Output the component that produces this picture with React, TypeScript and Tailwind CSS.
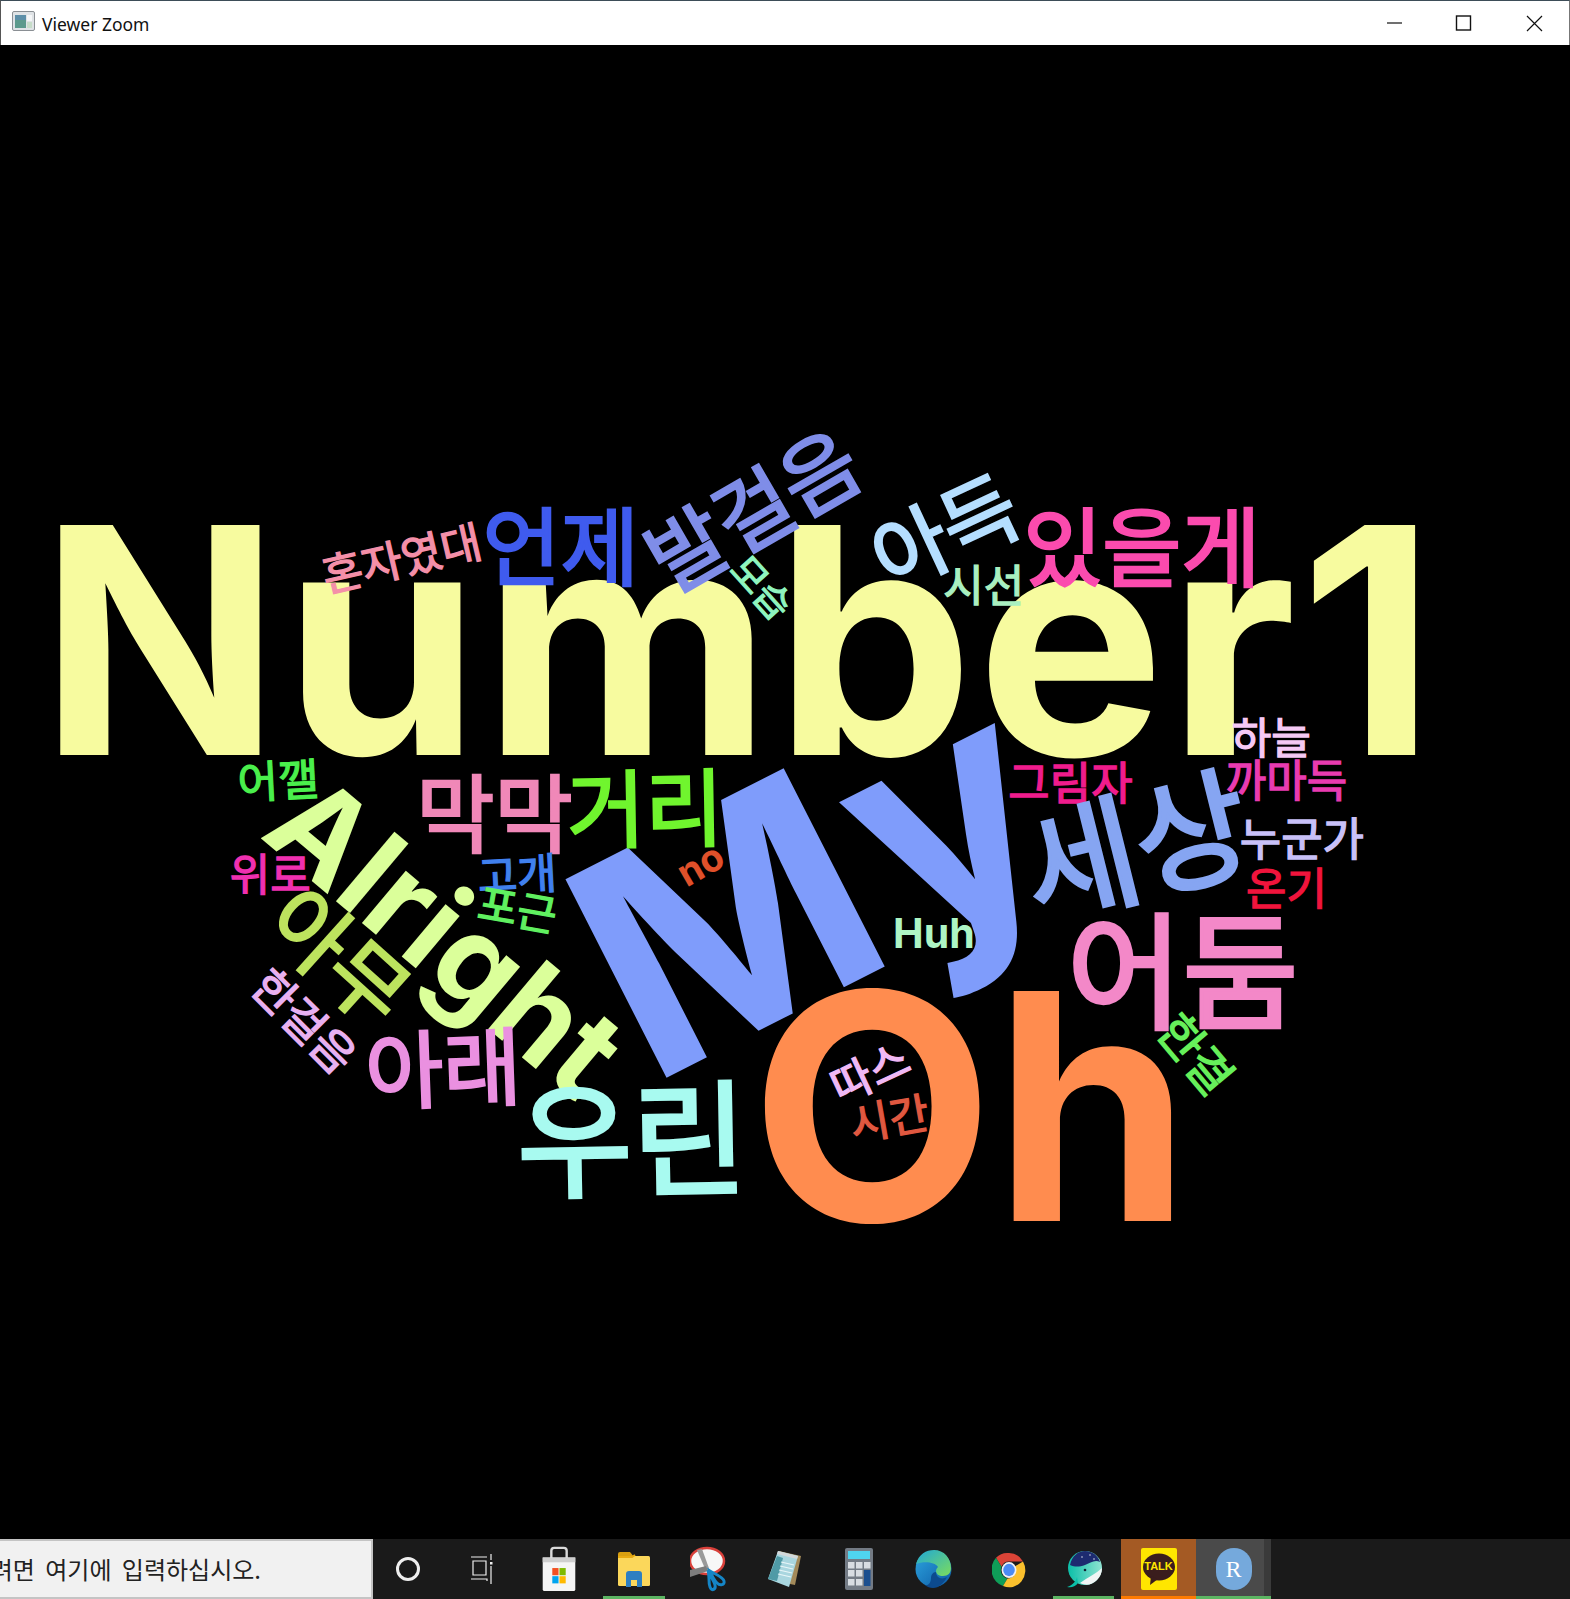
import { CSSProperties, ReactNode } from 'react';

const S = 1570 / 1540;

type Word = { t: string; x: number; y: number; f: number; r?: number; c: string; latin?: boolean; ls?: number };

// x, y, are centres measured on the shrunk reference, f is the font size in real pixels
const words: Word[] = [
  { t: 'Number1', x: 725, y: 628, f: 316, c: '#f7fb9f', latin: true, ls: 3 },
  { t: 'Oh', x: 952, y: 1085, f: 316, c: '#ff8c4f', latin: true },
  { t: 'My', x: 798, y: 861, f: 306, r: -27, c: '#7f9cfb', latin: true, ls: 6 },
  { t: 'Alright', x: 438, y: 917, f: 125, r: 40, c: '#dbff9a', latin: true },
  { t: 'Huh', x: 916, y: 915, f: 41, c: '#aef5c5', latin: true },
  { t: 'no', x: 687, y: 847, f: 38, r: -30, c: '#e0502a', latin: true },
  { t: '혼자였대', x: 393, y: 545, f: 44, r: -13, c: '#f48fa8' },
  { t: '언제', x: 550, y: 531, f: 85, c: '#3f5bee' },
  { t: '발걸음', x: 737, y: 497, f: 83, r: -30, c: '#7f8de8' },
  { t: '모습', x: 748, y: 575, f: 38, r: 48, c: '#8ff5be' },
  { t: '아득', x: 925, y: 518, f: 82, r: -25, c: '#b5deff' },
  { t: '있을게', x: 1120, y: 533, f: 86, c: '#fb4bae' },
  { t: '시선', x: 965, y: 572, f: 44, c: '#a9f0c0' },
  { t: '하늘', x: 1247, y: 721, f: 43, c: '#f5c9f5' },
  { t: '까마득', x: 1262, y: 763, f: 44, c: '#e93bb0' },
  { t: '그림자', x: 1050, y: 765, f: 45, c: '#f01c8c' },
  { t: '누군가', x: 1277, y: 820, f: 45, c: '#c8c0f8' },
  { t: '온기', x: 1262, y: 869, f: 44, c: '#f0143c' },
  { t: '세상', x: 1112, y: 823, f: 124, r: -14, c: '#86a5f2' },
  { t: '어둠', x: 1160, y: 946, f: 126, c: '#f388c8' },
  { t: '한결', x: 1175, y: 1032, f: 47, r: 50, c: '#66f05a' },
  { t: '거리', x: 633, y: 788, f: 85, r: -1, c: '#70f52e' },
  { t: '막막', x: 485, y: 793, f: 85, c: '#f088b8' },
  { t: '어깰', x: 273, y: 763, f: 44, r: -3, c: '#4aef4c' },
  { t: '위로', x: 265, y: 855, f: 44, c: '#f030b0' },
  { t: '고개', x: 507, y: 855, f: 43, r: -3, c: '#4080ee' },
  { t: '포근', x: 508, y: 890, f: 43, r: 10, c: '#60f060' },
  { t: '아무', x: 335, y: 935, f: 84, r: 42, c: '#bde35e' },
  { t: '한걸음', x: 300, y: 1000, f: 45, r: 45, c: '#e8b0f0' },
  { t: '아래', x: 435, y: 1043, f: 85, r: -2, c: '#ea90e0' },
  { t: '우린', x: 620, y: 1110, f: 125, r: -1, c: '#a8faf0' },
  { t: '따스', x: 852, y: 1050, f: 44, r: -25, c: '#f0b8f5' },
  { t: '시간', x: 872, y: 1095, f: 43, r: -10, c: '#e05840' },
];

function CloudWord({ w }: { w: Word }) {
  const style: CSSProperties = {
    left: w.x * S,
    top: w.y * S - 45,
    fontSize: w.f,
    color: w.c,
    letterSpacing: w.ls,
    transform: `translate(-50%, -50%) rotate(${w.r ?? 0}deg)`,
    WebkitTextStroke: w.latin ? undefined : `${w.f * 0.03}px ${w.c}`,
  };
  return (
    <span
      style={style}
      className={
        w.latin
          ? 'absolute whitespace-nowrap leading-none font-bold font-["Inter",sans-serif]'
          : 'absolute whitespace-nowrap leading-none font-normal font-["Noto_Sans_CJK_KR",sans-serif]'
      }
    >
      {w.t}
    </span>
  );
}

function Slot({ children, className }: { children: ReactNode; className?: string }) {
  return <div className={'relative flex h-full w-[75px] shrink-0 items-center justify-center ' + (className ?? '')}>{children}</div>;
}

function Underline({ className }: { className: string }) {
  return <div className={'absolute bottom-0 h-[3px] ' + className} />;
}

function TitleIcon() {
  return (
    <svg width="23" height="20" viewBox="0 0 23 20">
      <rect x="0.5" y="0.5" width="22" height="19" rx="1.5" fill="#dfe3e6" stroke="#8a8f94" />
      <rect x="3" y="4" width="11" height="13" fill="#5c9a8c" />
      <rect x="3" y="4" width="11" height="5" fill="#5d8fa8" />
      <rect x="15" y="4" width="5" height="6" fill="#f4f6f7" />
      <rect x="15" y="11" width="5" height="6" fill="#c7ddc9" />
    </svg>
  );
}

function StoreIcon() {
  return (
    <svg width="36" height="46" viewBox="0 0 36 48">
      <path d="M10 14V5a3 3 0 0 1 3-3h10a3 3 0 0 1 3 3v9" fill="none" stroke="#d9d9d9" strokeWidth="2.5" />
      <path d="M1 12h34v33a2 2 0 0 1-2 2H3a2 2 0 0 1-2-2z" fill="#f5f5f5" />
      <rect x="1" y="12" width="34" height="5" fill="#cfcfcf" />
      <rect x="11" y="23" width="6.5" height="7.5" fill="#f25022" />
      <rect x="18.5" y="23" width="6.5" height="7.5" fill="#7fba00" />
      <rect x="11" y="31.5" width="6.5" height="7.5" fill="#00a4ef" />
      <rect x="18.5" y="31.5" width="6.5" height="7.5" fill="#ffb900" />
    </svg>
  );
}

function FolderIcon() {
  return (
    <svg width="34" height="36" viewBox="0 0 34 36">
      <path d="M1 3a2 2 0 0 1 2-2h10l4 5h-16z" fill="#d9a011" />
      <rect x="1" y="5" width="32" height="30" rx="1.5" fill="#fbd75b" />
      <path d="M1 6h14l3-2" fill="none" stroke="#e8ab12" strokeWidth="2" />
      <path d="M9 36V23a3 3 0 0 1 3-3h10a3 3 0 0 1 3 3v13h-5v-7h-6v7z" fill="#2d7fc1" />
    </svg>
  );
}

function SnipIcon() {
  return (
    <svg width="38" height="46" viewBox="0 0 38 46">
      <ellipse cx="17" cy="15" rx="17" ry="13" fill="#f7f7f7" stroke="#d9403a" strokeWidth="2.5" />
      <path d="M7 4l9 21 4 0L12 3z" fill="#9a9a9a" />
      <path d="M0 24l16-4 2 5L0 31z" fill="#7d7d7d" />
      <path d="M18 24c2 7 0 12 2 17s6 2 5-2-5-9-7-15z" fill="none" stroke="#1585c6" strokeWidth="3" />
      <path d="M20 25c5 3 13 6 14 10s-4 5-7 2-5-7-7-12z" fill="none" stroke="#1585c6" strokeWidth="3" />
    </svg>
  );
}

function NotepadIcon() {
  return (
    <svg width="34" height="38" viewBox="0 0 34 38">
      <path d="M12 1l22 5-6 29-5-1z" fill="#a38a5a" />
      <path d="M11 1l20 5-9 31L1 29z" fill="#a9d6df" />
      <path d="M11 1l20 5-1 3-20-5z" fill="#d3d8da" />
      <path d="M1 29l9-23 6 2-6 23z" fill="#4f9aa6" />
      <path d="M14 12l13 3M13 16l13 3M12 20l13 3M11 24l13 3" stroke="#e8f6f8" strokeWidth="1.2" />
    </svg>
  );
}

function CalcIcon() {
  return (
    <svg width="28" height="42" viewBox="0 0 28 42">
      <rect width="28" height="42" rx="2" fill="#737b85" />
      <rect x="3" y="3" width="22" height="8" fill="#4fd4ef" />
      {[14, 22, 31].map((y) =>
        [3, 11].map((x) => <rect key={`${x}-${y}`} x={x} y={y} width="6.5" height="6.5" fill="#d8dde2" />),
      )}
      <rect x="19" y="14" width="6.5" height="6.5" fill="#d8dde2" />
      <rect x="19" y="22" width="6.5" height="16" fill="#1b4f8f" />
    </svg>
  );
}

function EdgeIcon() {
  return (
    <svg width="37" height="42" viewBox="0 0 37 42">
      <defs>
        <linearGradient id="edgeA" x1="0" y1="0" x2="1" y2="1">
          <stop offset="0" stopColor="#2ea6e0" />
          <stop offset="1" stopColor="#0c59a4" />
        </linearGradient>
        <linearGradient id="edgeB" x1="0" y1="0" x2="1" y2="1">
          <stop offset="0" stopColor="#1fa8d8" />
          <stop offset="1" stopColor="#7bdc5c" />
        </linearGradient>
      </defs>
      <circle cx="18.5" cy="21" r="18" fill="url(#edgeA)" />
      <path d="M1 16C4 6 11 2 19 2c10 0 17 8 17 18 0 5-3 8-8 8-4 0-7-2-7-5 0-2 1-3 2-4-3-5-14-6-22-3z" fill="url(#edgeB)" />
      <path d="M21 24c0 6 6 8 11 5-3 6-8 11-14 11-3 0-6-1-8-3 4 1 6-3 6-7 0-3 2-6 5-6z" fill="#0c4a8e" />
    </svg>
  );
}

function ChromeIcon() {
  return (
    <svg width="34" height="38" viewBox="0 0 34 38">
      <g transform="translate(0 2) scale(1 1.06)">
        <path d="M17 1a16 16 0 0 1 14 8H17a8 8 0 0 0-7.5 5L4 5.5A16 16 0 0 1 17 1z" fill="#db4437" />
        <path d="M4 5.5l5.5 8.5a8 8 0 0 0 6 11L11 32A16 16 0 0 1 4 5.5z" fill="#0f9d58" />
        <path d="M31 9a16 16 0 0 1-20 23l4.500-7a8 8 0 0 0 7.500-11.500z" fill="#fbc02d" />
        <circle cx="17" cy="17" r="7.500" fill="#f1f1f1" />
        <circle cx="17" cy="17" r="5.800" fill="#4b8bf4" />
      </g>
    </svg>
  );
}

function WhaleIcon() {
  return (
    <svg width="36" height="40" viewBox="0 0 36 40">
      <defs>
        <linearGradient id="whaleBody" x1="0" y1="0" x2="1" y2="0">
          <stop offset="0" stopColor="#0bbfa8" />
          <stop offset="1" stopColor="#8fe3d2" />
        </linearGradient>
      </defs>
      <circle cx="19" cy="19" r="17" fill="url(#whaleBody)" />
      <path d="M4 16C6 7 12 2 19 2c8 0 13 5 15 11-5-3-10 1-15 3-6 2-10 2-15 0z" fill="#1d2b70" />
      <path d="M14 34c6 3 12 2 17-3 3-3 5-7 5-12-6 6-14 9-22 15z" fill="#f1f5f5" />
      <path d="M1 38c4 1 8 0 11-4l-1-6c-1 4-4 8-10 10z" fill="#0bbfa8" />
      <circle cx="19" cy="21" r="1.300" fill="#123" />
      <circle cx="16" cy="8" r="0.700" fill="#fff" />
      <circle cx="24" cy="6" r="0.700" fill="#fff" />
      <circle cx="28" cy="10" r="0.700" fill="#fff" />
    </svg>
  );
}

function KakaoBubble() {
  return (
    <svg className="absolute inset-0" width="36" height="42" viewBox="0 0 36 42">
      <ellipse cx="18" cy="19" rx="16" ry="13.500" fill="#3a1d1d" />
      <path d="M10 28l-1 9 8-6z" fill="#3a1d1d" />
    </svg>
  );
}

export default function App() {
  return (
    <div className="flex h-[1599px] w-[1570px] flex-col overflow-hidden bg-black">
      <header className="flex h-[45px] shrink-0 items-center border-t border-l border-r border-t-[#3d4d58] border-l-[#555] border-r-[#777] bg-white text-[#111]">
        <div className="ml-[11px] mb-[5px]">
          <TitleIcon />
        </div>
        <span className='ml-[7px] mt-[2px] text-[17.5px] font-["Noto_Sans",sans-serif]'>Viewer Zoom</span>
        <div className="ml-auto flex items-center">
          <svg width="209" height="44" viewBox="0 0 209 44" fill="none" stroke="#111" strokeWidth="1.2">
            <path d="M27 22h15" />
            <rect x="96.500" y="15" width="14" height="14" strokeWidth="1.4" />
            <path d="M167 15l15 15M182 15l-15 15" />
          </svg>
        </div>
      </header>

      <main className="relative min-h-0 flex-1">
        {words.map((w) => (
          <CloudWord key={w.t + w.x} w={w} />
        ))}
      </main>

      <footer className="flex h-[60px] shrink-0 bg-[#1a1a1a]">
        <div className='flex h-full w-[373px] shrink-0 items-center justify-end overflow-hidden whitespace-nowrap border-2 border-l-0 border-[#c4c4c4] bg-[#f1f1f1] pr-[110px] text-[24px] text-[#222] [word-spacing:5px] font-["Noto_Sans_CJK_KR",sans-serif]'>
          검색하려면 여기에 입력하십시오.
        </div>
        <div className="flex h-full w-[70px] shrink-0 items-center justify-center">
          <div className="h-[24px] w-[24px] rounded-full border-[3px] border-[#eee]" />
        </div>
        <div className="flex h-full w-[78px] shrink-0 items-center justify-center">
          <svg width="24" height="32" viewBox="0 0 24 32" fill="none" stroke="#eee" strokeWidth="1.2">
            <path d="M1 4h16M3 8h13v14H3zM1 26h16v2M21 1v6M21 13v18" />
            <rect x="20" y="9" width="2.500" height="2.500" fill="#eee" stroke="none" />
          </svg>
        </div>
        <Slot><StoreIcon /></Slot>
        <Slot>
          <FolderIcon />
          <Underline className="left-[7px] right-[6px] bg-[#5cb562]" />
        </Slot>
        <Slot><SnipIcon /></Slot>
        <Slot><NotepadIcon /></Slot>
        <Slot><CalcIcon /></Slot>
        <Slot><EdgeIcon /></Slot>
        <Slot><ChromeIcon /></Slot>
        <Slot>
          <WhaleIcon />
          <Underline className="left-[7px] right-[7px] bg-[#5cb562]" />
        </Slot>
        <Slot className="bg-[#a45a24]">
          <div className="relative flex h-[42px] w-[36px] items-center justify-center rounded-[2px] bg-[#ffe600]">
            <KakaoBubble />
            <span className='relative mb-[5px] text-[11px] font-bold text-[#ffe600] font-["Liberation_Sans",sans-serif]'>TALK</span>
          </div>
          <Underline className="left-0 right-0 bg-[#ff7a00]" />
        </Slot>
        <Slot className="bg-[#4a4a4a]">
          <div className='flex h-[42px] w-[36px] items-center justify-center rounded-full bg-[#75a9dc] text-[24px] text-white font-["Liberation_Serif",serif]'>
            R
          </div>
          <div className="absolute bottom-0 right-0 top-0 w-[7px] bg-[#3a3a3a]" />
          <Underline className="left-0 right-0 bg-[#5cb562]" />
        </Slot>
      </footer>
    </div>
  );
}
